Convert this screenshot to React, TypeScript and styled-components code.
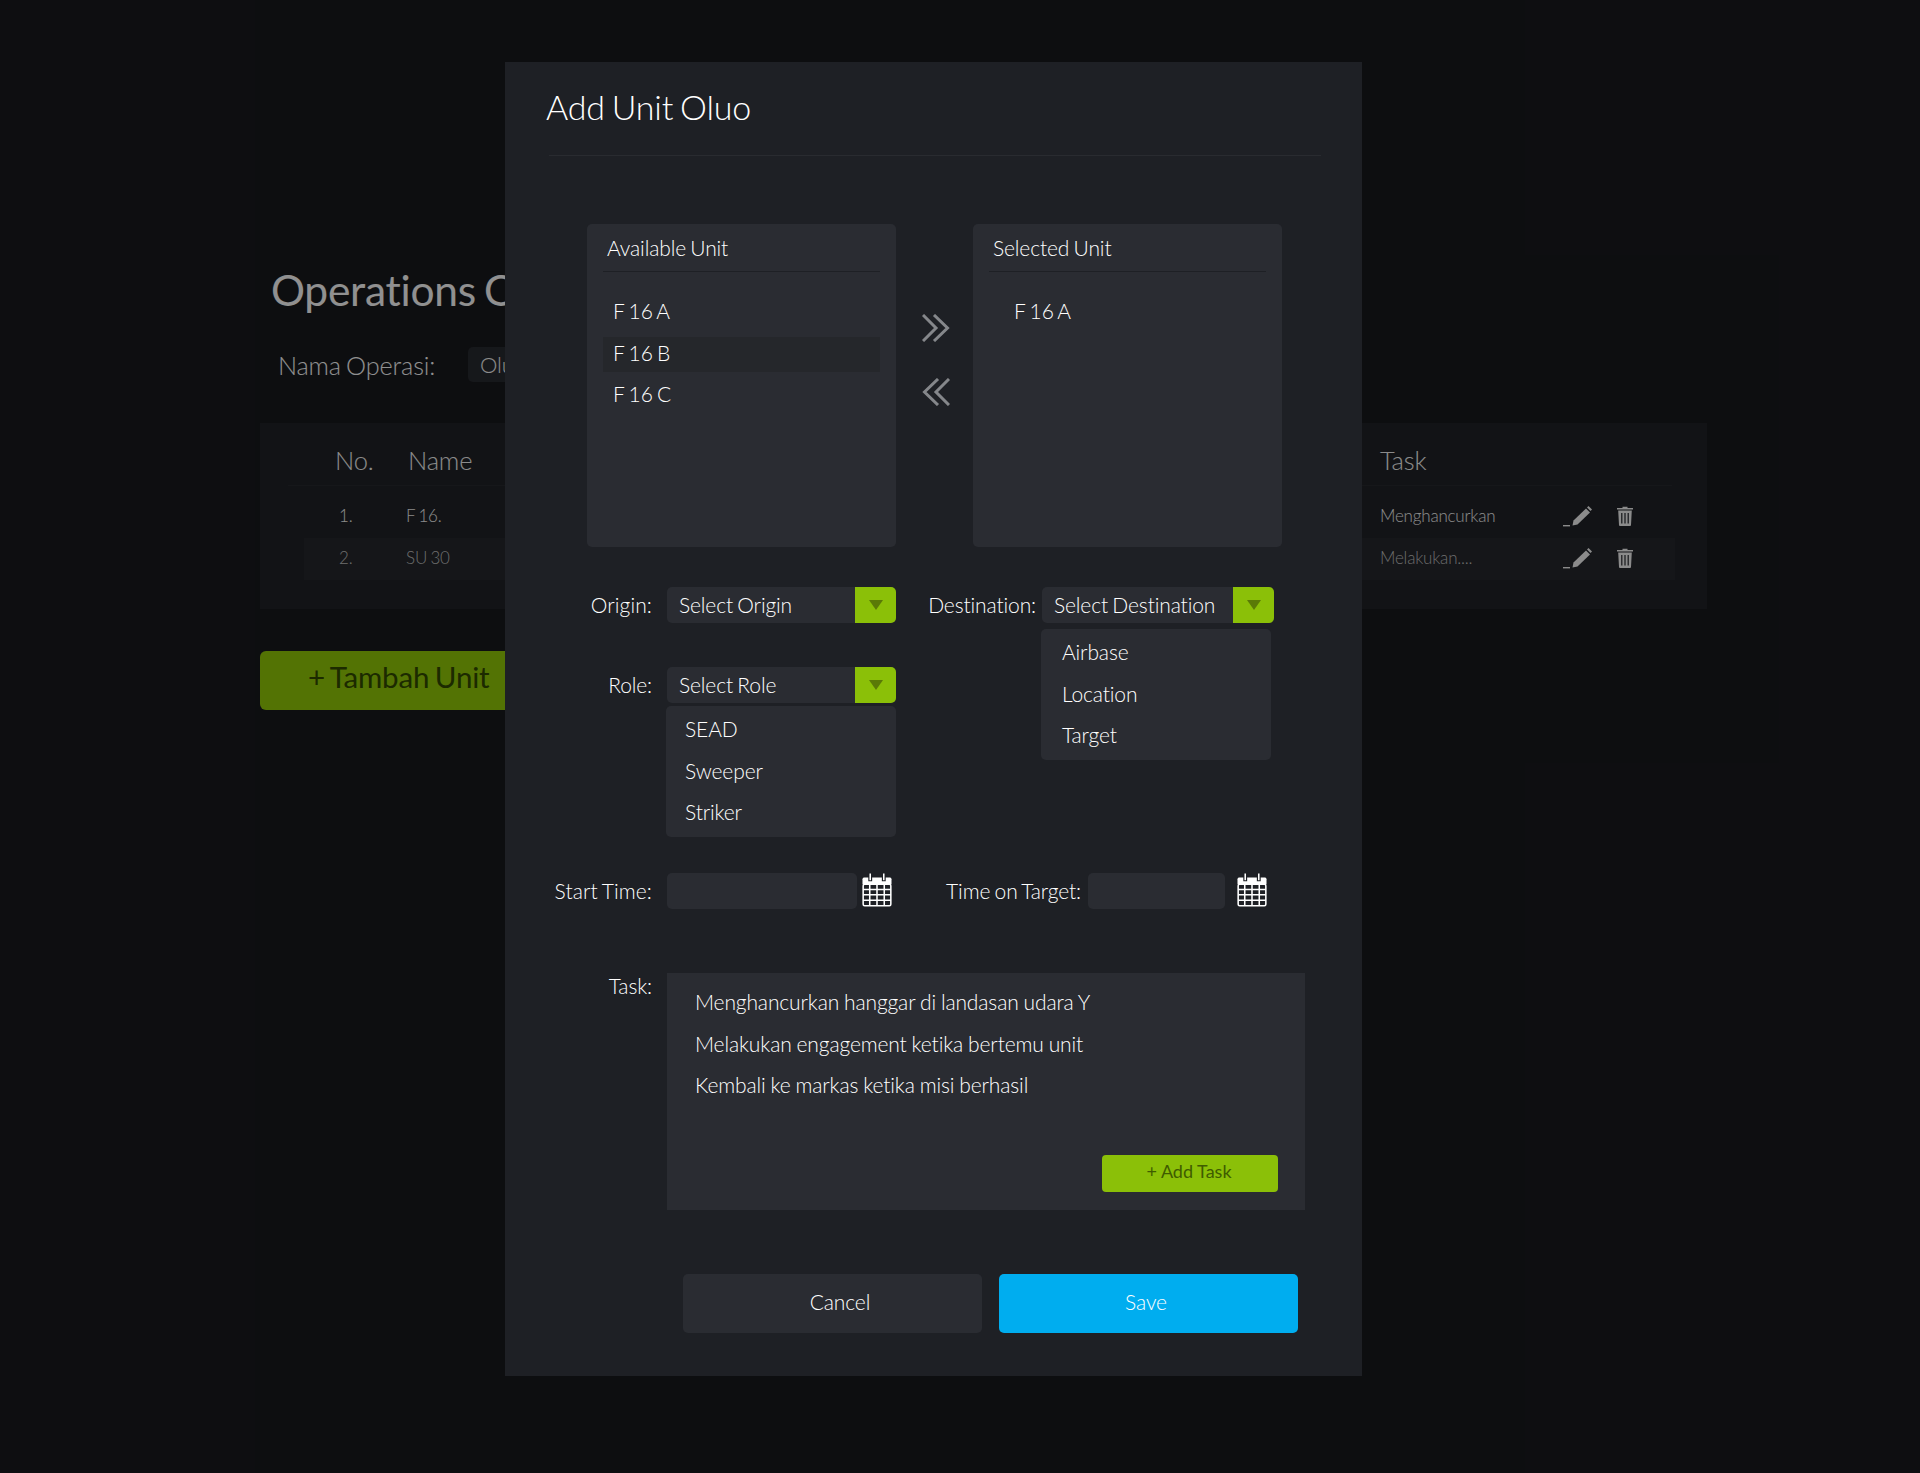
import React from "react";
import styled, { createGlobalStyle } from "styled-components";

const Global = createGlobalStyle`
  html, body { margin: 0; padding: 0; background: #17181c; }
  body { font-family: "Lato", "Liberation Sans", sans-serif; font-weight: 300; color: #fff; }
  * { box-sizing: border-box; letter-spacing: -0.006em; word-spacing: -0.06em; }
`;

const Page = styled.div`
  position: relative;
  width: 1920px;
  height: 1473px;
  overflow: hidden;
  padding: 263px 0 0 260px;
`;
const PageTitle = styled.h1`
  margin: 0 0 0 11px;
  font-size: 42.5px;
  line-height: 54px;
  font-weight: 400;
  color: #f0f0f0;
`;
const NameRow = styled.div`
  display: flex;
  align-items: center;
  margin: 30px 0 0 18px;
  height: 35px;
`;
const NameLabel = styled.span`
  width: 190px;
  font-size: 25.3px;
  color: #f0f0f0;
`;
const NameInput = styled.div`
  width: 300px;
  height: 35px;
  line-height: 35px;
  padding-left: 12px;
  border-radius: 5px;
  background: #26282d;
  font-size: 22px;
  color: #e8e8e8;
`;
const TablePanel = styled.div`
  width: 1447px;
  height: 186px;
  margin-top: 41px;
  background: #1e2025;
`;
const TableHead = styled.div`
  display: grid;
  grid-template-columns: 73px 972px auto;
  align-items: center;
  width: 1384px;
  height: 63px;
  margin-left: 28px;
  padding: 11px 0 0 47px;
  border-bottom: 1px solid #25272c;
  font-size: 25.5px;
  letter-spacing: -0.02em;
  color: #e8e8e8;
`;
const TableBody = styled.div`
  margin: 10px 0 0 44px;
  width: 1371px;
`;
const RowText = styled.span`
  padding-bottom: 3px;
  letter-spacing: -0.012em;
`;
const TableRow = styled.div<{ $shaded?: boolean }>`
  display: grid;
  grid-template-columns: 67px 974px 183px 54px auto;
  align-items: center;
  height: 42px;
  padding-left: 35px;
  background: ${(p) => (p.$shaded ? "#23252a" : "transparent")};
  font-size: 17px;
  color: ${(p) => (p.$shaded ? "#b5b5b5" : "#e8e8e8")};
  & > svg {
    margin-bottom: 2px;
  }
`;
const AddUnit = styled.div`
  width: 400px;
  height: 59px;
  margin-top: 42px;
  padding-left: 48px;
  line-height: 52px;
  border-radius: 6px;
  background: #8bc008;
  color: #2f4700;
  font-size: 29.5px;
  font-weight: 400;
`;
const Backdrop = styled.div`
  position: absolute;
  inset: 0;
  background: rgba(0, 0, 0, 0.4);
`;

const Modal = styled.div`
  position: absolute;
  left: 505px;
  top: 62px;
  width: 857px;
  height: 1314px;
  background: #1e2025;
`;
const ModalTitle = styled.h2`
  margin: 0 0 0 41px;
  padding-top: 22px;
  height: 60px;
  font-size: 34px;
  line-height: 46px;
  font-weight: 300;
  color: #fff;
`;
const Rule = styled.div`
  width: 772px;
  height: 1px;
  margin: 33px 0 0 44px;
  background: #292b30;
`;
const Lists = styled.div`
  display: flex;
  margin: 68px 0 0 82px;
`;
const ListPanel = styled.div`
  width: 309px;
  height: 323px;
  padding: 0 16px;
  border-radius: 5px;
  background: #2a2c32;
`;
const ListTitle = styled.div`
  height: 48px;
  padding: 0 0 0 4px;
  line-height: 48px;
  font-size: 21px;
  border-bottom: 1px solid #1e2025;
`;
const ListBody = styled.div<{ $indent: number }>`
  display: flex;
  flex-direction: column;
  gap: 6.5px;
  margin-top: 23px;
  & > div {
    padding-left: ${(p) => p.$indent}px;
  }
`;
const ListItem = styled.div<{ $active?: boolean }>`
  height: 35px;
  line-height: 32px;
  font-size: 21px;
  background: ${(p) => (p.$active ? "#25272b" : "transparent")};
`;
const Arrows = styled.div`
  width: 77px;
  display: flex;
  flex-direction: column;
  align-items: center;
  padding: 90px 0 0 3px;
  gap: 36px;
`;
const FormRow = styled.div<{ $top: number }>`
  display: grid;
  grid-template-columns: 147px 229px 363px;
  column-gap: 15px;
  align-items: center;
  height: 36px;
  margin-top: ${(p) => p.$top}px;
`;
const Label = styled.span`
  padding-bottom: 1px;
  text-align: right;
  font-size: 21px;
  letter-spacing: 0.005em;
  white-space: nowrap;
`;
const TightLabel = styled(Label)`
  letter-spacing: -0.006em;
`;
const Field = styled.div`
  position: relative;
  display: flex;
  align-items: center;
`;
const RightField = styled(Field)<{ $gap: number; $end: number }>`
  justify-content: flex-end;
  gap: ${(p) => p.$gap}px;
  padding-right: ${(p) => p.$end}px;
`;
const Select = styled.div<{ $w: number }>`
  position: relative;
  display: flex;
  width: ${(p) => p.$w}px;
  height: 36px;
  border-radius: 5px;
  background: #2a2c32;
  font-size: 21px;
  line-height: 35px;
`;
const SelectText = styled.span`
  flex: 1;
  padding-left: 12px;
  white-space: nowrap;
`;
const Caret = styled.span`
  display: flex;
  align-items: center;
  justify-content: center;
  width: 41px;
  height: 36px;
  border-radius: 0 5px 5px 0;
  background: #8bc008;
  &::after {
    content: "";
    border-left: 7px solid transparent;
    border-right: 7px solid transparent;
    border-top: 10px solid #5a7a07;
  }
`;
const Menu = styled.div<{ $top: number; $w: number }>`
  position: absolute;
  z-index: 2;
  left: -1px;
  top: ${(p) => p.$top}px;
  width: ${(p) => p.$w}px;
  height: 131px;
  padding-top: 2px;
  border-radius: 5px;
  background: #2a2c32;
  font-size: 21px;
`;
const MenuItem = styled.div<{ $pad: number }>`
  height: 41.5px;
  line-height: 41.5px;
  padding-left: ${(p) => p.$pad}px;
`;
const TimeInput = styled.div<{ $w: number }>`
  width: ${(p) => p.$w}px;
  height: 36px;
  border-radius: 5px;
  background: #2a2c32;
`;
const CalendarSlot = styled.span`
  display: inline-flex;
  margin: 0 0 2px 5px;
`;
const TaskRow = styled.div`
  display: grid;
  grid-template-columns: 147px 638px;
  column-gap: 15px;
  margin-top: 64px;
`;
const TaskLabel = styled(Label)`
  padding-bottom: 0;
  line-height: 26px;
  letter-spacing: -0.006em;
`;
const TaskPanel = styled.div`
  display: flex;
  flex-direction: column;
  height: 237px;
  padding: 8px 27px 18px 28px;
  background: #2a2c32;
  font-size: 21px;
`;
const TaskItem = styled.div`
  height: 41.5px;
  line-height: 41.5px;
  word-spacing: -0.03em;
`;
const AddTask = styled.div`
  align-self: flex-end;
  margin-top: auto;
  width: 176px;
  height: 37px;
  padding-right: 2px;
  text-align: center;
  line-height: 32px;
  border-radius: 4px;
  background: #8bc008;
  color: #3f5c00;
  font-size: 18px;
  font-weight: 400;
  letter-spacing: 0;
  word-spacing: 0;
`;
const Footer = styled.div`
  display: flex;
  gap: 17px;
  margin: 64px 0 0 178px;
`;
const FootButton = styled.div<{ $primary?: boolean }>`
  width: 299px;
  height: 59px;
  padding: ${(p) => (p.$primary ? "0 5px 0 0" : "0 0 0 15px")};
  text-align: center;
  line-height: 56px;
  border-radius: 5px;
  font-size: 21px;
  background: ${(p) => (p.$primary ? "#00adef" : "#2a2c32")};
`;

const Chevrons = ({ flip }: { flip?: boolean }) => (
  <svg width="28" height="28" viewBox="0 0 28 28" fill="none" stroke="#85878b" strokeWidth="3"
    style={flip ? { transform: "scaleX(-1)" } : undefined}>
    <path d="M1 1 L14 14 L1 27" />
    <path d="M12 1 L25.5 14 L12 27" />
  </svg>
);

const Calendar = () => (
  <svg width="30" height="34" viewBox="0 0 31 34" fill="none">
    <path d="M2 4 H29 Q30.5 4 30.5 6 V11 H0.5 V6 Q0.5 4 2 4 Z" fill="#fff" />
    <rect x="1.2" y="11" width="28.6" height="22.2" rx="1.5" stroke="#fff" strokeWidth="1.6" fill="none" />
    <path d="M8 11.5 V33 M15.5 11.5 V33 M23 11.5 V33 M1 16.5 H30 M1 22 H30 M1 27.5 H30" stroke="#fff" strokeWidth="1.6" />
    <path d="M8.5 0 V8 M22.5 0 V8" stroke="#1e2025" strokeWidth="4" />
    <path d="M8.5 0 V7 M22.5 0 V7" stroke="#fff" strokeWidth="1.6" />
  </svg>
);

const Pencil = () => (
  <svg width="29" height="22" viewBox="0 0 29 22" fill="#e8e8e8">
    <rect x="0" y="20" width="7" height="1.4" />
    <path d="M9.5 20.5 L10.5 15.5 L23 3.5 L27 7.5 L14.5 19.5 Z" />
    <path d="M24 2.5 L25.5 1 L29 4.5 L27.5 6 Z" />
  </svg>
);

const Trash = () => (
  <svg width="16" height="20" viewBox="0 0 16 20" fill="#e8e8e8">
    <path d="M0 2 H5.5 V0.8 H10.5 V2 H16 V3.5 H0 Z" />
    <path fillRule="evenodd" d="M1.2 4.5 H14.8 L14 19 Q14 20 13 20 H3 Q2 20 2 19 Z M4.2 7 V17.5 H5.4 V7 Z M7.4 7 V17.5 H8.6 V7 Z M10.6 7 V17.5 H11.8 V7 Z" />
  </svg>
);

export default function App() {
  return (
    <>
      <Global />
      <Page>
        <PageTitle>Operations Oluo</PageTitle>
        <NameRow>
          <NameLabel>Nama Operasi:</NameLabel>
          <NameInput>Oluo</NameInput>
        </NameRow>
        <TablePanel>
          <TableHead>
            <span>No.</span>
            <span>Name</span>
            <span>Task</span>
          </TableHead>
          <TableBody>
            <TableRow>
              <RowText>1.</RowText>
              <RowText>F 16.</RowText>
              <RowText>Menghancurkan</RowText>
              <Pencil />
              <Trash />
            </TableRow>
            <TableRow $shaded>
              <RowText>2.</RowText>
              <RowText>SU 30</RowText>
              <RowText>Melakukan....</RowText>
              <Pencil />
              <Trash />
            </TableRow>
          </TableBody>
        </TablePanel>
        <AddUnit>+ Tambah Unit</AddUnit>
        <Backdrop />
        <Modal>
          <ModalTitle>Add Unit Oluo</ModalTitle>
          <Rule />
          <Lists>
            <ListPanel>
              <ListTitle>Available Unit</ListTitle>
              <ListBody $indent={10}>
                <ListItem>F 16 A</ListItem>
                <ListItem $active>F 16 B</ListItem>
                <ListItem>F 16 C</ListItem>
              </ListBody>
            </ListPanel>
            <Arrows>
              <Chevrons />
              <Chevrons flip />
            </Arrows>
            <ListPanel>
              <ListTitle>Selected Unit</ListTitle>
              <ListBody $indent={25}>
                <ListItem>F 16 A</ListItem>
              </ListBody>
            </ListPanel>
          </Lists>
          <FormRow $top={40}>
            <Label>Origin:</Label>
            <Field>
              <Select $w={229}>
                <SelectText>Select Origin</SelectText>
                <Caret />
              </Select>
            </Field>
            <RightField $gap={6} $end={0}>
              <TightLabel>Destination:</TightLabel>
              <Select $w={232}>
                <SelectText>Select Destination</SelectText>
                <Caret />
                <Menu $top={42} $w={230}>
                  <MenuItem $pad={21}>Airbase</MenuItem>
                  <MenuItem $pad={21}>Location</MenuItem>
                  <MenuItem $pad={21}>Target</MenuItem>
                </Menu>
              </Select>
            </RightField>
          </FormRow>
          <FormRow $top={44}>
            <TightLabel>Role:</TightLabel>
            <Field>
              <Select $w={229}>
                <SelectText>Select Role</SelectText>
                <Caret />
                <Menu $top={39} $w={230}>
                  <MenuItem $pad={19}>SEAD</MenuItem>
                  <MenuItem $pad={19}>Sweeper</MenuItem>
                  <MenuItem $pad={19}>Striker</MenuItem>
                </Menu>
              </Select>
            </Field>
          </FormRow>
          <FormRow $top={170}>
            <Label>Start Time:</Label>
            <Field>
              <TimeInput $w={190} />
              <CalendarSlot>
                <Calendar />
              </CalendarSlot>
            </Field>
            <RightField $gap={7} $end={7}>
              <TightLabel>Time on Target:</TightLabel>
              <TimeInput $w={137} />
              <CalendarSlot>
                <Calendar />
              </CalendarSlot>
            </RightField>
          </FormRow>
          <TaskRow>
            <TaskLabel>Task:</TaskLabel>
            <TaskPanel>
              <TaskItem>Menghancurkan hanggar di landasan udara Y</TaskItem>
              <TaskItem>Melakukan engagement ketika bertemu unit</TaskItem>
              <TaskItem>Kembali ke markas ketika misi berhasil</TaskItem>
              <AddTask>+ Add Task</AddTask>
            </TaskPanel>
          </TaskRow>
          <Footer>
            <FootButton>Cancel</FootButton>
            <FootButton $primary>Save</FootButton>
          </Footer>
        </Modal>
      </Page>
    </>
  );
}
